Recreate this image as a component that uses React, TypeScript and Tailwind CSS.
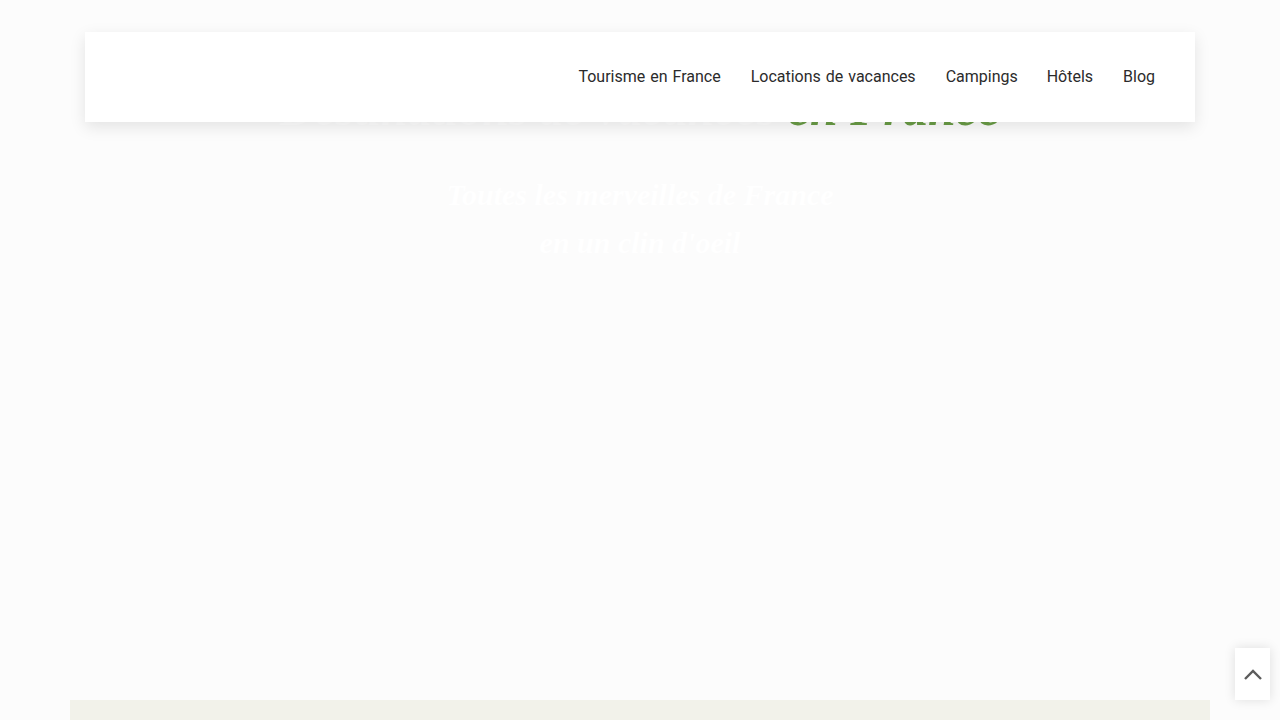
export default function App() {
  return (
    <div className="relative flex h-[720px] w-full flex-col items-center overflow-hidden bg-[#fcfcfc] font-['Roboto',sans-serif]">
      <div className="relative z-0 mt-[83px] flex h-[617px] w-full flex-col items-center">
        <h1 className="text-center font-['Liberation_Serif',serif] text-[48px] leading-[50px] font-bold text-white italic">
          Destinations de vacances <span className="text-[50px] text-[#6a9c46]">en France</span>
        </h1>
        <p className="mt-[37px] text-center font-['Liberation_Serif',serif] text-[30px] leading-[48px] font-bold text-white italic">
          Toutes les merveilles de France
          <br />
          en un clin d'oeil
        </p>
      </div>
      <div className="h-5 w-[1140px] shrink-0 bg-[#f2f2ea]" />
      <header className="absolute top-8 left-[85px] z-10 flex h-[90px] w-[1110px] justify-end bg-white pt-[35px] pr-10 shadow-[0_5px_15px_rgba(0,0,0,0.1)]">
        <nav className="flex h-5 items-center gap-[30px] text-base [word-spacing:1px] whitespace-nowrap text-[#2b2b2b]">
          <a>Tourisme en France</a>
          <a>Locations de vacances</a>
          <a className="w-[71px]">Campings</a>
          <a>Hôtels</a>
          <a>Blog</a>
        </nav>
      </header>
      <button className="absolute top-[648px] left-[1235px] z-10 flex h-[52px] w-[35px] items-center justify-center bg-white shadow-[0_0_12px_rgba(0,0,0,0.12)]">
        <svg className="ml-px" width="18" height="11" viewBox="0 0 18 11" fill="none" stroke="#5c5c5c" strokeWidth="2.4">
          <path d="M1 10 L9 2 L17 10" />
        </svg>
      </button>
    </div>
  );
}
